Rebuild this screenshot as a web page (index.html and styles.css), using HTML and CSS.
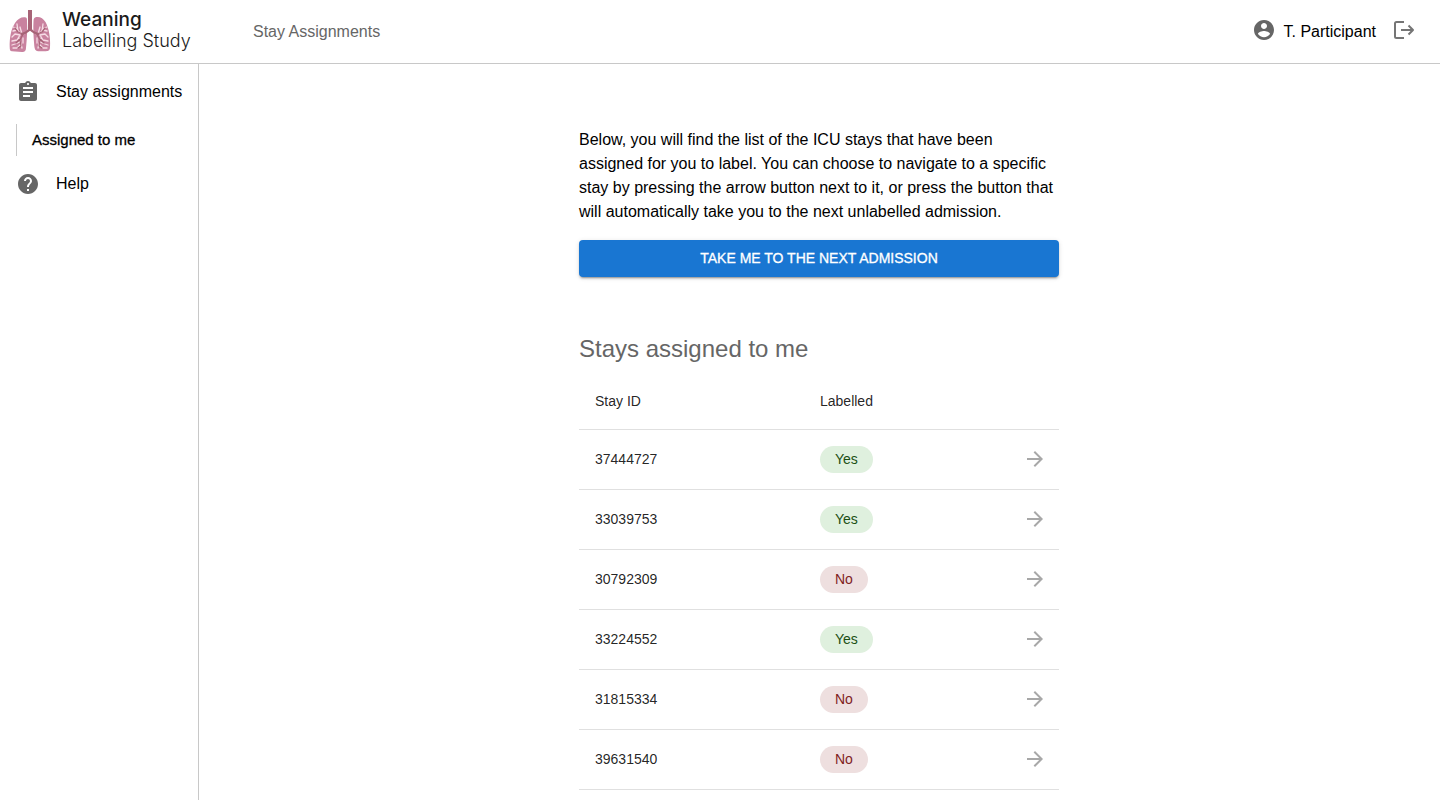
FILE: index.html
```html
<!DOCTYPE html>
<html lang="en">
<head>
<meta charset="utf-8">
<meta name="viewport" content="width=device-width, initial-scale=1">
<title>Weaning Labelling Study</title>
<link rel="stylesheet" href="styles.css">
</head>
<body>
<header class="topbar">
  <a class="brand" href="#">
    <svg class="brand-logo" viewBox="0 0 44 44" aria-hidden="true">
      <path fill="#c9829f" d="M18 7.500C14 6.500 10 8.500 7 13C3 19 1.500 28 1.700 37C1.800 40 2 41 4 41.200L14 42C16.500 42.200 18 41 18 38C19 28 19.500 19 19 11C19 9 19 8 18 7.500Z"/>
      <path fill="#c9829f" d="M27 7.500C31 6 35 8 37.500 12C41 18 42.500 28 42 37C42 40 41 41 38 41.200H30C27.500 41.200 26.500 39 26.300 36C25.500 27 25 18 25.500 11C25.500 9 26 8 27 7.500Z"/>
      <g fill="none" stroke="#f6dce5" stroke-width="1.300" stroke-linecap="round" stroke-linejoin="round">
        <path d="M16 24L11 22L8 18L5 17M10 21L9 14M9 20L5 21M14 24L12 17M12 25L7 24L4 27M12 25L9 30L4 31M11 28L13 34L9 38L5 38M12 32L7 34L4 35M13 34L14 38M15 28L15 33"/>
        <path d="M28 24L33 22L36 18L39 17M34 21L35 14M35 20L39 21M30 24L32 17M32 25L37 24L40 27M32 25L35 30L40 31M33 28L31 34L35 38L39 38M32 32L37 34L40 35M31 34L30 38M29 28L29 33"/>
      </g>
      <g fill="none" stroke="#a76477" stroke-linecap="round" stroke-linejoin="round">
        <path stroke-width="4" stroke-linecap="butt" d="M22 0V20"/>
        <path stroke-width="2.400" d="M21.500 19C20 22 17 23 14 24M22.500 19C24 22 27 23 30 24"/>
        <path stroke-width="1.300" d="M15 24L10 22L7 18M15 24L12 30L13 36L10 38M12 29L8 33M29 24L34 22L37 18M29 24L32 30L31 36L34 38M32 29L36 33"/>
      </g>
    </svg>
    <span class="brand-name"><span class="brand-main">Weaning</span><span class="brand-sub">Labelling Study</span></span>
  </a>
  <span class="page-title">Stay Assignments</span>
  <div class="account">
    <svg class="icon" viewBox="0 0 24 24" aria-hidden="true"><path d="M12 2C6.480 2 2 6.480 2 12s4.480 10 10 10 10-4.480 10-10S17.520 2 12 2zm0 3c1.660 0 3 1.340 3 3s-1.340 3-3 3-3-1.340-3-3 1.340-3 3-3zm0 14.200c-2.500 0-4.710-1.280-6-3.220.030-1.990 4-3.080 6-3.080 1.990 0 5.970 1.090 6 3.080-1.290 1.940-3.500 3.220-6 3.220z"/></svg>
    <span>T. Participant</span>
    <button class="logout" type="button" aria-label="Log out">
      <svg class="icon-line" viewBox="0 0 24 24" aria-hidden="true"><path d="M12 4H4.500Q3 4 3 5.500V18.500Q3 20 4.500 20H12M9 12H21M16.500 7.500L21 12L16.500 16.500"/></svg>
    </button>
  </div>
</header>
<div class="shell">
  <nav class="sidebar">
    <a class="nav-item" href="#">
      <svg class="icon" viewBox="0 0 24 24" aria-hidden="true"><path d="M19 3h-4.180C14.400 1.840 13.300 1 12 1c-1.300 0-2.400.840-2.820 2H5c-1.100 0-2 .900-2 2v14c0 1.100.900 2 2 2h14c1.100 0 2-.900 2-2V5c0-1.100-.900-2-2-2zm-7 0c.550 0 1 .450 1 1s-.450 1-1 1-1-.450-1-1 .450-1 1-1zm2 14H7v-2h7v2zm3-4H7v-2h10v2zm0-4H7V7h10v2z"/></svg>
      <span>Stay assignments</span>
    </a>
    <a class="nav-child" href="#">Assigned to me</a>
    <a class="nav-item" href="#">
      <svg class="icon" viewBox="0 0 24 24" aria-hidden="true"><path d="M12 2C6.480 2 2 6.480 2 12s4.480 10 10 10 10-4.480 10-10S17.520 2 12 2zm1 17h-2v-2h2v2zm2.070-7.750l-.900.920C13.450 12.900 13 13.500 13 15h-2v-.500c0-1.100.450-2.100 1.170-2.830l1.240-1.260c.370-.360.590-.860.590-1.410 0-1.100-.900-2-2-2s-2 .900-2 2H8c0-2.210 1.790-4 4-4s4 1.790 4 4c0 .880-.360 1.680-.930 2.250z"/></svg>
      <span>Help</span>
    </a>
  </nav>
  <main class="main">
    <div class="content">
      <p class="intro">Below, you will find the list of the ICU stays that have been assigned for you to label. You can choose to navigate to a specific stay by pressing the arrow button next to it, or press the button that will automatically take you to the next unlabelled admission.</p>
      <button class="next" type="button">TAKE ME TO THE NEXT ADMISSION</button>
      <h1 class="heading">Stays assigned to me</h1>
      <table class="stays">
        <thead><tr><th class="col-id" scope="col">Stay ID</th><th scope="col">Labelled</th><td class="col-go"></td></tr></thead>
        <tbody>
          <tr><td>37444727</td><td><span class="chip yes">Yes</span></td><td><a class="go" href="#" aria-label="Open stay 37444727"><svg viewBox="0 0 24 24"><path d="M12 4l-1.410 1.410L16.170 11H4v2h12.170l-5.580 5.590L12 20l8-8z"/></svg></a></td></tr>
          <tr><td>33039753</td><td><span class="chip yes">Yes</span></td><td><a class="go" href="#" aria-label="Open stay 33039753"><svg viewBox="0 0 24 24"><path d="M12 4l-1.410 1.410L16.170 11H4v2h12.170l-5.580 5.590L12 20l8-8z"/></svg></a></td></tr>
          <tr><td>30792309</td><td><span class="chip no">No</span></td><td><a class="go" href="#" aria-label="Open stay 30792309"><svg viewBox="0 0 24 24"><path d="M12 4l-1.410 1.410L16.170 11H4v2h12.170l-5.580 5.590L12 20l8-8z"/></svg></a></td></tr>
          <tr><td>33224552</td><td><span class="chip yes">Yes</span></td><td><a class="go" href="#" aria-label="Open stay 33224552"><svg viewBox="0 0 24 24"><path d="M12 4l-1.410 1.410L16.170 11H4v2h12.170l-5.580 5.590L12 20l8-8z"/></svg></a></td></tr>
          <tr><td>31815334</td><td><span class="chip no">No</span></td><td><a class="go" href="#" aria-label="Open stay 31815334"><svg viewBox="0 0 24 24"><path d="M12 4l-1.410 1.410L16.170 11H4v2h12.170l-5.580 5.590L12 20l8-8z"/></svg></a></td></tr>
          <tr><td>39631540</td><td><span class="chip no">No</span></td><td><a class="go" href="#" aria-label="Open stay 39631540"><svg viewBox="0 0 24 24"><path d="M12 4l-1.410 1.410L16.170 11H4v2h12.170l-5.580 5.590L12 20l8-8z"/></svg></a></td></tr>
        </tbody>
      </table>
    </div>
  </main>
</div>
</body>
</html>
```
FILE: styles.css
```css
* { box-sizing: border-box; }
body {
  margin: 0;
  min-height: 100vh;
  display: flex;
  flex-direction: column;
  background: #fff;
  color: #000;
  font: 16px/24px "Liberation Sans", Arial, sans-serif;
}
a { color: inherit; text-decoration: none; }
button { font: inherit; cursor: pointer; }
.topbar {
  display: flex;
  align-items: center;
  height: 64px;
  padding: 0 24px 0 8px;
  border-bottom: 1px solid #c8c8c8;
}
.brand { display: flex; align-items: center; gap: 10px; width: 245px; }
.brand-logo { width: 44px; height: 44px; }
.brand-name { display: flex; flex-direction: column; padding-bottom: 4px; font-family: Inter, sans-serif; color: #1a1a1a; }
.brand-main { font-size: 19px; line-height: 22px; font-weight: 500; }
.brand-sub { font-size: 18px; line-height: 20px; font-weight: 300; }
.page-title { color: #666; }
.account { display: flex; align-items: center; gap: 8px; margin-left: auto; }
.account svg { margin-bottom: 4px; }
.icon { width: 24px; height: 24px; fill: #666; flex: none; }
.logout { display: flex; padding: 0; margin-left: 8px; border: 0; background: none; }
.icon-line { width: 24px; height: 24px; fill: none; stroke: #757575; stroke-width: 2; stroke-linejoin: round; }
.shell { display: flex; flex: 1; }
.sidebar {
  flex: none;
  width: 199px;
  padding: 12px 0 0 16px;
  border-right: 1px solid #c8c8c8;
}
.nav-item { display: flex; align-items: center; gap: 16px; height: 32px; white-space: nowrap; }
.nav-child {
  display: flex;
  align-items: center;
  height: 32px;
  margin: 16px 0 12px;
  padding-left: 15px;
  border-left: 1px solid #c8c8c8;
  font-size: 15px;
  -webkit-text-stroke: 0.3px;
}
.main { flex: 1; display: flex; justify-content: center; padding: 64px 17px 10px 16px; }
.content { width: 100%; max-width: 480px; }
.intro { margin: 0 0 16px; }
.next {
  display: block;
  width: 100%;
  padding: 6px 16px;
  border: 0;
  border-radius: 4px;
  background: #1976d2;
  color: #fff;
  font-size: 14px;
  line-height: 25px;
  -webkit-text-stroke: 0.3px;
  box-shadow: 0 3px 1px -2px rgba(0,0,0,.2), 0 2px 2px rgba(0,0,0,.14), 0 1px 5px rgba(0,0,0,.12);
}
.heading { margin: 56px 0 8px; font-size: 24px; line-height: 32px; font-weight: 400; color: #666; }
.stays { width: 100%; border-collapse: separate; border-spacing: 0; table-layout: fixed; font-size: 14px; color: rgba(0,0,0,.87); }
.stays th, .stays td { padding: 16px; border-bottom: 1px solid #e0e0e0; text-align: left; font-weight: 400; }
.stays tbody td { height: 60px; padding: 0 16px 1px; }
.col-id { width: 225px; }
.stays .col-go { width: 60px; }
.chip { display: inline-block; padding: 0 15px; border-radius: 14px; line-height: 27px; vertical-align: middle; }
.yes { background: #dff0de; color: #1b4f14; }
.no { background: #eedfdf; color: #7f1d1d; }
.go { display: flex; justify-content: flex-end; }
.go svg { width: 24px; height: 24px; margin-right: -4px; flex: none; fill: #a8a8a8; }
```
